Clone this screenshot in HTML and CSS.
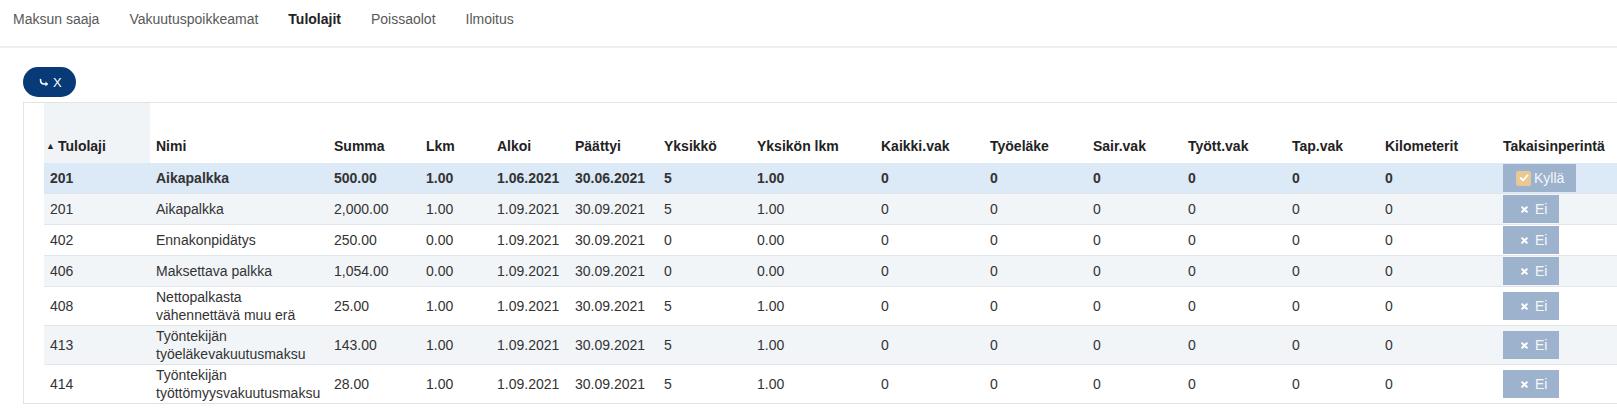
FILE: index.html
```html
<!DOCTYPE html>
<html lang="fi">
<head>
    <meta charset="UTF-8">
    <meta name="viewport" content="width=device-width, initial-scale=1.0">
    <title>Tulolajit</title>
    <link rel="stylesheet" href="styles.css">
</head>
<body>
    <nav class="tabs">
        <a href="#">Maksun saaja</a>
        <a href="#">Vakuutuspoikkeamat</a>
        <a href="#" class="active">Tulolajit</a>
        <a href="#">Poissaolot</a>
        <a href="#">Ilmoitus</a>
    </nav>

    <div class="content">
        <button type="button" class="back-btn">
            <svg width="10" height="9" viewBox="0 0 10 9"><path d="M1.5 1.5 C1.5 5 3 6 5 6 H8" fill="none" stroke="#fff" stroke-width="1.6" stroke-linecap="round"/><path d="M6.5 3.6 L9 6 L6.5 8.4 Z" fill="#fff"/></svg>
            X
        </button>

        <div class="grid-wrap">
            <div class="grid-box">
                <table class="grid">
                    <colgroup>
                        <col style="width:106px"><col style="width:178px"><col style="width:92px"><col style="width:71px">
                        <col style="width:78px"><col style="width:89px"><col style="width:93px"><col style="width:124px">
                        <col style="width:109px"><col style="width:103px"><col style="width:95px"><col style="width:104px">
                        <col style="width:93px"><col style="width:118px"><col style="width:140px">
                    </colgroup>
                    <thead>
                        <tr>
                            <th class="sorted"><span class="sort-arrow">&#9650;</span>Tulolaji</th>
                            <th>Nimi</th>
                            <th>Summa</th>
                            <th>Lkm</th>
                            <th>Alkoi</th>
                            <th>Päättyi</th>
                            <th>Yksikkö</th>
                            <th>Yksikön lkm</th>
                            <th>Kaikki.vak</th>
                            <th>Työeläke</th>
                            <th>Sair.vak</th>
                            <th>Tyött.vak</th>
                            <th>Tap.vak</th>
                            <th>Kilometerit</th>
                            <th>Takaisinperintä</th>
                        </tr>
                    </thead>
                    <tbody>
                        <tr class="selected">
                            <td>201</td><td>Aikapalkka</td><td>500.00</td><td>1.00</td><td>1.06.2021</td><td>30.06.2021</td><td>5</td><td>1.00</td>
                            <td>0</td><td>0</td><td>0</td><td>0</td><td>0</td><td>0</td>
                            <td><span class="flag yes"><span class="check"><svg width="10" height="8" viewBox="0 0 10 8"><path d="M1.5 4 L4 6.3 L8.5 1.5" fill="none" stroke="#fff" stroke-width="1.8" stroke-linecap="round" stroke-linejoin="round"/></svg></span>Kyllä</span></td>
                        </tr>
                        <tr>
                            <td>201</td><td>Aikapalkka</td><td>2,000.00</td><td>1.00</td><td>1.09.2021</td><td>30.09.2021</td><td>5</td><td>1.00</td>
                            <td>0</td><td>0</td><td>0</td><td>0</td><td>0</td><td>0</td>
                            <td><span class="flag"><svg class="x" width="7" height="7" viewBox="0 0 7 7"><path d="M1.2 1.2 L5.8 5.8 M5.8 1.2 L1.2 5.8" stroke="#fff" stroke-width="2" stroke-linecap="round"/></svg>Ei</span></td>
                        </tr>
                        <tr>
                            <td>402</td><td>Ennakonpidätys</td><td>250.00</td><td>0.00</td><td>1.09.2021</td><td>30.09.2021</td><td>0</td><td>0.00</td>
                            <td>0</td><td>0</td><td>0</td><td>0</td><td>0</td><td>0</td>
                            <td><span class="flag"><svg class="x" width="7" height="7" viewBox="0 0 7 7"><path d="M1.2 1.2 L5.8 5.8 M5.8 1.2 L1.2 5.8" stroke="#fff" stroke-width="2" stroke-linecap="round"/></svg>Ei</span></td>
                        </tr>
                        <tr>
                            <td>406</td><td>Maksettava palkka</td><td>1,054.00</td><td>0.00</td><td>1.09.2021</td><td>30.09.2021</td><td>0</td><td>0.00</td>
                            <td>0</td><td>0</td><td>0</td><td>0</td><td>0</td><td>0</td>
                            <td><span class="flag"><svg class="x" width="7" height="7" viewBox="0 0 7 7"><path d="M1.2 1.2 L5.8 5.8 M5.8 1.2 L1.2 5.8" stroke="#fff" stroke-width="2" stroke-linecap="round"/></svg>Ei</span></td>
                        </tr>
                        <tr>
                            <td>408</td><td>Nettopalkasta vähennettävä muu erä</td><td>25.00</td><td>1.00</td><td>1.09.2021</td><td>30.09.2021</td><td>5</td><td>1.00</td>
                            <td>0</td><td>0</td><td>0</td><td>0</td><td>0</td><td>0</td>
                            <td><span class="flag"><svg class="x" width="7" height="7" viewBox="0 0 7 7"><path d="M1.2 1.2 L5.8 5.8 M5.8 1.2 L1.2 5.8" stroke="#fff" stroke-width="2" stroke-linecap="round"/></svg>Ei</span></td>
                        </tr>
                        <tr>
                            <td>413</td><td>Työntekijän työeläkevakuutusmaksu</td><td>143.00</td><td>1.00</td><td>1.09.2021</td><td>30.09.2021</td><td>5</td><td>1.00</td>
                            <td>0</td><td>0</td><td>0</td><td>0</td><td>0</td><td>0</td>
                            <td><span class="flag"><svg class="x" width="7" height="7" viewBox="0 0 7 7"><path d="M1.2 1.2 L5.8 5.8 M5.8 1.2 L1.2 5.8" stroke="#fff" stroke-width="2" stroke-linecap="round"/></svg>Ei</span></td>
                        </tr>
                        <tr>
                            <td>414</td><td>Työntekijän työttömyysvakuutusmaksu</td><td>28.00</td><td>1.00</td><td>1.09.2021</td><td>30.09.2021</td><td>5</td><td>1.00</td>
                            <td>0</td><td>0</td><td>0</td><td>0</td><td>0</td><td>0</td>
                            <td><span class="flag"><svg class="x" width="7" height="7" viewBox="0 0 7 7"><path d="M1.2 1.2 L5.8 5.8 M5.8 1.2 L1.2 5.8" stroke="#fff" stroke-width="2" stroke-linecap="round"/></svg>Ei</span></td>
                        </tr>
                    </tbody>
                </table>
            </div>
        </div>
    </div>
</body>
</html>
```

FILE: styles.css
```css
body {
    margin: 0;
    font-family: "Liberation Sans", Arial, sans-serif;
    color: #333;
    background-color: #fff;
    overflow: hidden;
}
.tabs {
    display: flex;
    gap: 30px;
    height: 48px;
    padding: 10px 0 0 13px;
    box-sizing: border-box;
    border-bottom: 2px solid #eeeeee;
}
.tabs a {
    font-size: 14px;
    line-height: 18px;
    color: #595959;
    text-decoration: none;
}
.tabs a.active {
    font-weight: bold;
    color: #222;
}
.content {
    padding: 19px 0 0 23px;
}
.back-btn {
    display: flex;
    align-items: center;
    gap: 4px;
    height: 30px;
    padding: 0 14px 0 16px;
    border: none;
    border-radius: 15px;
    background-color: #083a77;
    color: #fff;
    font-family: inherit;
    font-size: 13px;
    cursor: pointer;
}
.grid-wrap {
    margin-top: 5px;
}
.grid-box {
    width: 1635px;
    padding: 0 20px;
    border: 1px solid #e3e3e3;
}
.grid {
    width: 1593px;
    table-layout: fixed;
    border-collapse: collapse;
}
.grid th {
    height: 52px;
    padding: 0 2px 8px 6px;
    vertical-align: bottom;
    text-align: left;
    font-size: 14px;
    line-height: 18px;
    color: #222;
    white-space: nowrap;
}
.grid th.sorted {
    background-color: #f1f4f7;
    padding-left: 2px;
}
.sort-arrow {
    font-size: 9px;
    margin-right: 3px;
    vertical-align: 2px;
}
.grid td {
    padding: 1px 2px 1px 6px;
    border-top: 1px solid #e2e5e9;
    font-size: 14px;
    line-height: 18px;
    vertical-align: middle;
}
.grid tbody tr:nth-child(even) {
    background-color: #f2f5f8;
}
.grid tbody tr.selected {
    background-color: #dce9f7;
    font-weight: bold;
}
.grid tbody tr.selected td {
    border-top: none;
}
.flag {
    display: inline-flex;
    align-items: center;
    gap: 7px;
    height: 28px;
    padding: 0 12px 0 18px;
    background-color: #9db2cc;
    color: #f4f7fa;
    font-size: 14px;
    font-weight: normal;
}
.flag.yes {
    padding: 0 12px 0 13px;
    gap: 3px;
}
.check {
    display: inline-flex;
    align-items: center;
    justify-content: center;
    width: 15px;
    height: 15px;
    border-radius: 2px;
    background-color: #e8c993;
}
```
